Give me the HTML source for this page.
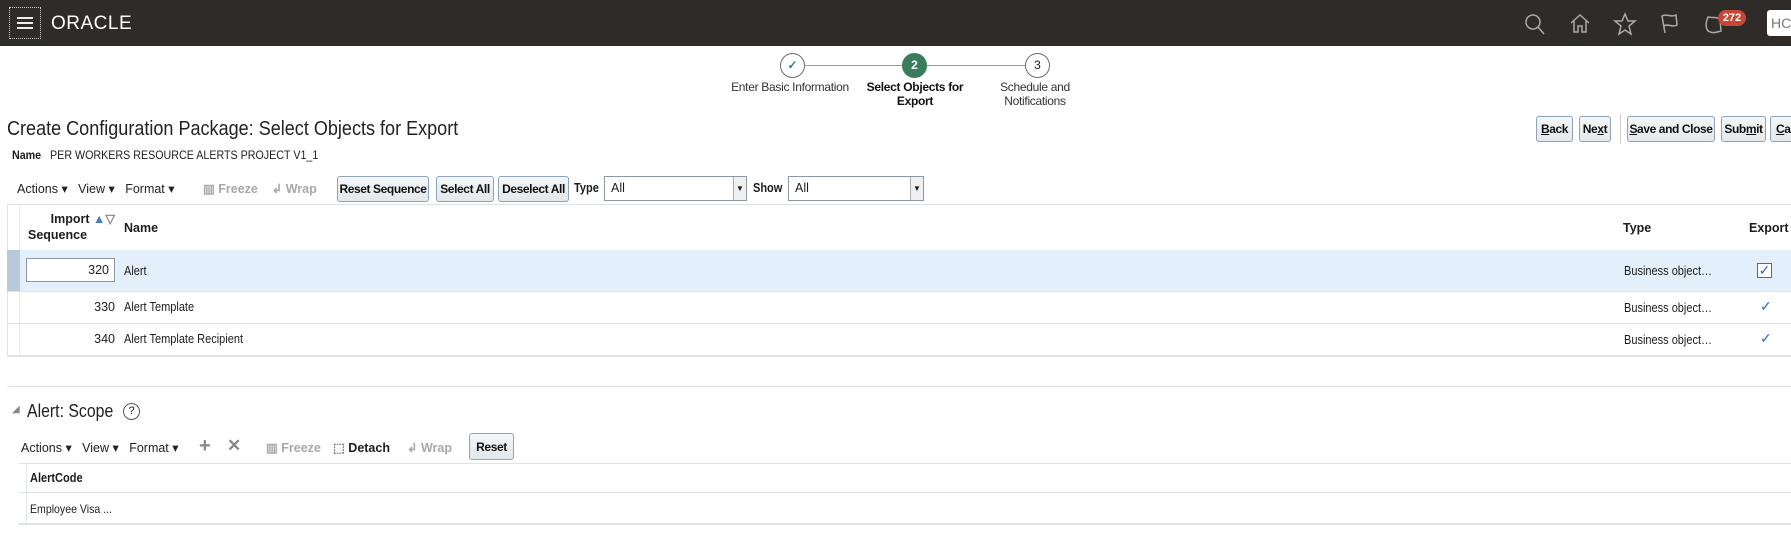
<!DOCTYPE html>
<html><head><meta charset="utf-8"><style>
*{box-sizing:border-box;margin:0;padding:0}
body{width:1791px;height:534px;overflow:hidden;background:#fff;font-family:"Liberation Sans",Arial,sans-serif;color:#1d1d1d;position:relative;font-size:12.5px}
.a{position:absolute;white-space:nowrap}
.n{transform:scaleX(.88);transform-origin:left center}
.hdr{left:0;top:0;width:1791px;height:46px;background:#2f2b28}
.btn{position:absolute;white-space:nowrap;height:26px;border:1px solid #8ea3b8;border-radius:3px;background:linear-gradient(#f4f6f8,#e3e8ec);font-weight:bold;font-size:12px;line-height:24px;text-align:center;color:#111;letter-spacing:-0.4px;overflow:hidden}
.tb{font-size:12.5px;color:#222}
.dis{color:#a8a8a8;font-weight:bold}
.sel{position:absolute;height:25px;border:1px solid #8b98a4;background:#fff;font-size:12.5px;line-height:23px;padding-left:6px}
.sel b{position:absolute;right:0;top:0;width:13px;height:23px;border-left:1px solid #aaa;background:#f0f0f0;font-size:8px;line-height:23px;text-align:center}
.hl{position:absolute;left:7px;width:1784px;height:1px;background:#dde3e8}
.circ{position:absolute;width:25px;height:25px;border-radius:50%;border:1.5px solid #6b6b6b;background:#fff;text-align:center;line-height:22px;font-size:12px}
.lbl{position:absolute;font-size:12px;text-align:center;line-height:14px;color:#333;letter-spacing:-0.3px}
.chk{color:#2a6ebd;font-size:14px}
</style></head><body>
<div class="a hdr"></div>
<div class="a" style="left:9px;top:7px;width:32px;height:32px;border:1px dotted #ccc"></div>
<div class="a" style="left:17px;top:17px;width:16px;height:2px;background:#eee;box-shadow:0 5px 0 #eee,0 10px 0 #eee"></div>
<div class="a" style="left:51px;top:13px;color:#fff;font-size:19px;letter-spacing:0.5px">ORACLE</div>
<svg class="a" style="left:1522px;top:11px" width="230" height="26" fill="none" stroke="#aaa" stroke-width="1.5">
<circle cx="11" cy="11" r="7"/><path d="M16 16l6 7"/>
<path d="M49 12l9-8 9 8M52 10v11h4v-6h4v6h4V10"/>
<path d="M103 3l3 7h7l-6 5 2 8-6-4-6 4 2-8-6-5h7z"/>
<path d="M143 22l-3-17c5-3 9 2 14-1l1 10c-5 3-9-2-13 1"/>
<path d="M186 20c-3-4-2-10 0-14 5 1 9 0 12 2l1 12c-4 1-8 3-13 0z"/>
</svg>
<div class="a" style="left:1718px;top:10px;width:28px;height:16px;border-radius:8px;background:#c74634;color:#fff;font-weight:bold;font-size:11px;text-align:center;line-height:16px">272</div>
<div class="a" style="left:1767px;top:10px;width:30px;height:26px;background:#fff;border-radius:3px;color:#777;font-size:14px;line-height:26px;padding-left:4px">HC</div>

<div class="a" style="left:805px;top:65px;width:110px;height:1px;background:#999"></div>
<div class="a" style="left:927px;top:65px;width:110px;height:1px;background:#999"></div>
<div class="circ" style="left:780px;top:53px;color:#2e8b57;font-weight:bold">✓</div>
<div class="circ" style="left:902px;top:53px;background:#3a7d5c;border-color:#3a7d5c;color:#fff;font-weight:bold">2</div>
<div class="circ" style="left:1025px;top:53px">3</div>
<div class="lbl" style="left:720px;top:80px;width:140px">Enter Basic Information</div>
<div class="lbl" style="left:855px;top:80px;width:120px;font-weight:bold;color:#111">Select Objects for<br>Export</div>
<div class="lbl" style="left:975px;top:80px;width:120px">Schedule and<br>Notifications</div>

<div class="a n" style="left:7px;top:117px;font-size:20.5px;color:#222">Create Configuration Package: Select Objects for Export</div>
<div class="btn" style="left:1536px;top:116px;width:37px"><u>B</u>ack</div>
<div class="btn" style="left:1579px;top:116px;width:32px">Ne<u>x</u>t</div>
<div class="a" style="left:1620px;top:114px;width:1px;height:30px;background:#ccc"></div>
<div class="btn" style="left:1627px;top:116px;width:88px"><u>S</u>ave and Close</div>
<div class="btn" style="left:1721px;top:116px;width:45px">Sub<u>m</u>it</div>
<div class="btn" style="left:1770px;top:116px;width:40px;text-align:left;padding-left:5px"><u>C</u>ancel</div>

<div class="a" style="left:12px;top:150px;font-size:11.5px;transform:scaleX(.93);transform-origin:left"><b>Name</b>&nbsp;&nbsp;&nbsp;PER WORKERS RESOURCE ALERTS PROJECT V1_1</div>

<div class="a tb" style="left:17px;top:181px">Actions ▾&nbsp;&nbsp; View ▾&nbsp;&nbsp; Format ▾</div>
<div class="a dis" style="left:203px;top:181px">▥ Freeze&nbsp;&nbsp;&nbsp; ↲ Wrap</div>
<div class="btn" style="left:337px;top:176px;width:92px">Reset Sequence</div>
<div class="btn" style="left:436px;top:176px;width:58px">Select All</div>
<div class="btn" style="left:498px;top:176px;width:71px">Deselect All</div>
<div class="a n" style="left:574px;top:181px;font-weight:bold">Type</div>
<div class="sel" style="left:604px;top:176px;width:143px">All<b>▼</b></div>
<div class="a n" style="left:753px;top:181px;font-weight:bold">Show</div>
<div class="sel" style="left:788px;top:176px;width:136px">All<b>▼</b></div>

<div class="hl" style="top:204px"></div>
<div class="a" style="left:7px;top:204px;width:1px;height:151px;background:#dde3e8"></div>
<div class="a" style="left:19px;top:204px;width:1px;height:151px;background:#e8ecef"></div>
<div class="a" style="left:29px;top:212px;width:86px;text-align:right;font-weight:bold;line-height:15px">Import <span style="color:#4a7db5">▲</span><span style="color:#888">▽</span></div>
<div class="a" style="left:28px;top:228px;font-weight:bold">Sequence</div>
<div class="a" style="left:124px;top:221px;font-weight:bold">Name</div>
<div class="a" style="left:1623px;top:221px;font-weight:bold">Type</div>
<div class="a" style="left:1749px;top:221px;font-weight:bold">Export</div>
<div class="a" style="left:7px;top:250px;width:1784px;height:41px;background:#e3effb"></div>
<div class="a" style="left:7px;top:250px;width:13px;height:41px;background:#b7c9da"></div>
<div class="a" style="left:26px;top:258px;width:89px;height:24px;background:#fff;border:1px solid #8b98a4;text-align:right;padding-right:5px;line-height:22px">320</div>
<div class="a n" style="left:124px;top:264px">Alert</div>
<div class="a n" style="left:1624px;top:264px">Business object…</div>
<div class="a" style="left:1757px;top:263px;width:15px;height:15px;border:1px solid #666;background:#fff;text-align:center;line-height:13px" ><span class="chk">✓</span></div>
<div class="hl" style="top:291px"></div>
<div class="a" style="left:85px;top:300px;width:30px;text-align:right">330</div>
<div class="a n" style="left:124px;top:300px">Alert Template</div>
<div class="a n" style="left:1624px;top:301px">Business object…</div>
<div class="a chk" style="left:1760px;top:298px">✓</div>
<div class="hl" style="top:323px"></div>
<div class="a" style="left:85px;top:332px;width:30px;text-align:right">340</div>
<div class="a n" style="left:124px;top:332px">Alert Template Recipient</div>
<div class="a n" style="left:1624px;top:333px">Business object…</div>
<div class="a chk" style="left:1760px;top:330px">✓</div>
<div class="hl" style="top:355px;height:2px"></div>
<div class="hl" style="top:386px"></div>

<div class="a" style="left:12px;top:404px;color:#888;font-size:10px">◢</div>
<div class="a n" style="left:27px;top:401px;font-size:18px;color:#222">Alert: Scope</div>
<div class="a" style="left:123px;top:403px;width:17px;height:17px;border:1.3px solid #555;border-radius:50%;font-size:11px;text-align:center;line-height:15px">?</div>

<div class="a tb" style="left:21px;top:440px">Actions ▾&nbsp;&nbsp; View ▾&nbsp;&nbsp; Format ▾</div>
<div class="a" style="left:199px;top:435px;font-size:20px;color:#888;font-weight:bold">+</div>
<div class="a" style="left:227px;top:436px;font-size:17px;color:#888;font-weight:bold">✕</div>
<div class="a dis" style="left:266px;top:440px">▥ Freeze</div>
<div class="a" style="left:333px;top:440px;font-weight:bold"><span style="color:#777">⬚</span> Detach</div>
<div class="a dis" style="left:407px;top:440px">↲ Wrap</div>
<div class="btn" style="left:469px;top:433px;width:45px;height:27px;line-height:26px">Reset</div>

<div class="a" style="left:19px;top:463px;width:1772px;height:1px;background:#dde3e8"></div>
<div class="a" style="left:26px;top:463px;width:1px;height:61px;background:#e3e8ec"></div>
<div class="a n" style="left:30px;top:471px;font-weight:bold">AlertCode</div>
<div class="a" style="left:19px;top:492px;width:1772px;height:1px;background:#dde3e8"></div>
<div class="a n" style="left:30px;top:502px;font-size:12px">Employee Visa ...</div>
<div class="a" style="left:19px;top:523px;width:1772px;height:2px;background:#dde3e8"></div>
</body></html>
